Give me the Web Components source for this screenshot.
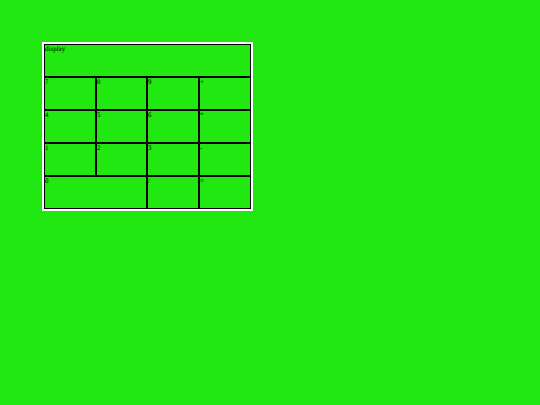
<!DOCTYPE html>
<html lang="en">
<head>
  <meta charset="utf-8">
  <meta name="viewport" content="width=device-width, initial-scale=1">
  <title>Calculator</title>
  <style>
    body {
      margin: 42px;
      background-color: #21e810;
      font-family: "Liberation Serif", "Times New Roman", serif;
      font-size: 7px;
      line-height: 8px;
      text-rendering: geometricPrecision;
      color: black;
    }
  </style>
</head>
<body>
  <calc-pad>
    <calc-display>display</calc-display>
    <calc-key>7</calc-key>
    <calc-key>8</calc-key>
    <calc-key>9</calc-key>
    <calc-key>+</calc-key>
    <calc-key>4</calc-key>
    <calc-key>5</calc-key>
    <calc-key>6</calc-key>
    <calc-key>*</calc-key>
    <calc-key>1</calc-key>
    <calc-key>2</calc-key>
    <calc-key>3</calc-key>
    <calc-key>-</calc-key>
    <calc-key wide>0</calc-key>
    <calc-key>/</calc-key>
    <calc-key>=</calc-key>
  </calc-pad>

  <script>
    class CalcPad extends HTMLElement {
      constructor() {
        super();
        this.attachShadow({ mode: 'open' });

        this.shadowRoot.innerHTML = `
          <style>
            :host {
              display: grid;
              grid-template-columns: 52fr 51fr 52fr 52fr;
              grid-auto-rows: 33px;
              box-sizing: border-box;
              max-width: 211px;
              border: 2px solid white;
            }
          </style>
          <slot></slot>
        `;
      }
    }

    class CalcDisplay extends HTMLElement {
      constructor() {
        super();
        this.attachShadow({ mode: 'open' });

        this.shadowRoot.innerHTML = `
          <style>
            :host {
              display: block;
              grid-column: 1 / -1;
              box-sizing: border-box;
              border: 1px solid black;
            }
            output {
              display: block;
            }
          </style>
          <output><slot></slot></output>
        `;
      }
    }

    class CalcKey extends HTMLElement {
      constructor() {
        super();
        this.attachShadow({ mode: 'open' });

        this.shadowRoot.innerHTML = `
          <style>
            :host {
              display: flex;
            }
            :host([wide]) {
              grid-column: span 2;
            }
            button {
              flex: 1;
              display: flex;
              align-items: flex-start;
              justify-content: flex-start;
              margin: 0;
              padding: 0;
              border: 1px solid black;
              background: none;
              color: inherit;
              font: inherit;
              text-rendering: inherit;
              cursor: pointer;
            }
          </style>
          <button type="button"><slot></slot></button>
        `;
      }
    }

    //  *  pad first, then the parts that sit in its grid  *  //
    customElements.define('calc-pad', CalcPad);
    customElements.define('calc-display', CalcDisplay);
    customElements.define('calc-key', CalcKey);
  </script>
</body>
</html>
